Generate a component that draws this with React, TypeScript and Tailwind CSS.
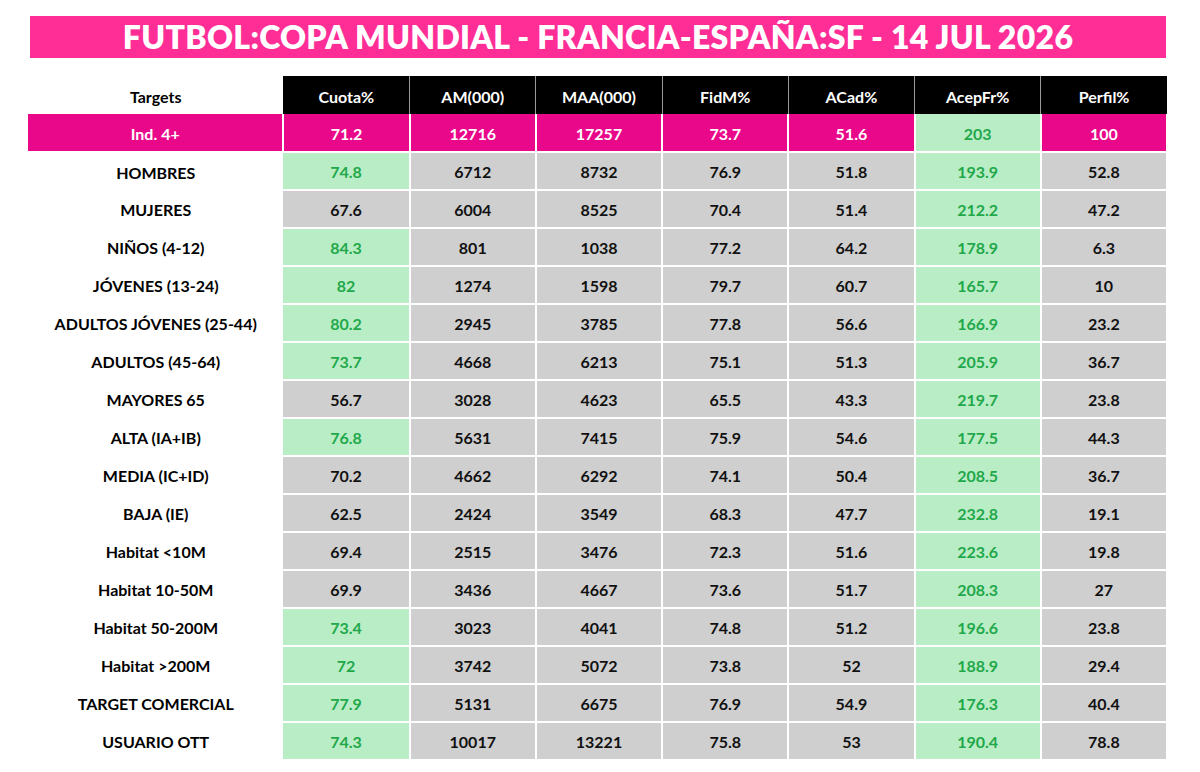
import React from 'react';

type Row = {
  name: string;
  cuota: string;
  cuotaUp: boolean;
  am: string;
  maa: string;
  fidm: string;
  acad: string;
  acep: string;
  perfil: string;
};

const ROWS: Row[] = [
  { name: 'HOMBRES', cuota: '74.8', cuotaUp: true, am: '6712', maa: '8732', fidm: '76.9', acad: '51.8', acep: '193.9', perfil: '52.8' },
  { name: 'MUJERES', cuota: '67.6', cuotaUp: false, am: '6004', maa: '8525', fidm: '70.4', acad: '51.4', acep: '212.2', perfil: '47.2' },
  { name: 'NIÑOS (4-12)', cuota: '84.3', cuotaUp: true, am: '801', maa: '1038', fidm: '77.2', acad: '64.2', acep: '178.9', perfil: '6.3' },
  { name: 'JÓVENES (13-24)', cuota: '82', cuotaUp: true, am: '1274', maa: '1598', fidm: '79.7', acad: '60.7', acep: '165.7', perfil: '10' },
  { name: 'ADULTOS JÓVENES (25-44)', cuota: '80.2', cuotaUp: true, am: '2945', maa: '3785', fidm: '77.8', acad: '56.6', acep: '166.9', perfil: '23.2' },
  { name: 'ADULTOS (45-64)', cuota: '73.7', cuotaUp: true, am: '4668', maa: '6213', fidm: '75.1', acad: '51.3', acep: '205.9', perfil: '36.7' },
  { name: 'MAYORES 65', cuota: '56.7', cuotaUp: false, am: '3028', maa: '4623', fidm: '65.5', acad: '43.3', acep: '219.7', perfil: '23.8' },
  { name: 'ALTA (IA+IB)', cuota: '76.8', cuotaUp: true, am: '5631', maa: '7415', fidm: '75.9', acad: '54.6', acep: '177.5', perfil: '44.3' },
  { name: 'MEDIA (IC+ID)', cuota: '70.2', cuotaUp: false, am: '4662', maa: '6292', fidm: '74.1', acad: '50.4', acep: '208.5', perfil: '36.7' },
  { name: 'BAJA (IE)', cuota: '62.5', cuotaUp: false, am: '2424', maa: '3549', fidm: '68.3', acad: '47.7', acep: '232.8', perfil: '19.1' },
  { name: 'Habitat <10M', cuota: '69.4', cuotaUp: false, am: '2515', maa: '3476', fidm: '72.3', acad: '51.6', acep: '223.6', perfil: '19.8' },
  { name: 'Habitat 10-50M', cuota: '69.9', cuotaUp: false, am: '3436', maa: '4667', fidm: '73.6', acad: '51.7', acep: '208.3', perfil: '27' },
  { name: 'Habitat 50-200M', cuota: '73.4', cuotaUp: true, am: '3023', maa: '4041', fidm: '74.8', acad: '51.2', acep: '196.6', perfil: '23.8' },
  { name: 'Habitat >200M', cuota: '72', cuotaUp: true, am: '3742', maa: '5072', fidm: '73.8', acad: '52', acep: '188.9', perfil: '29.4' },
  { name: 'TARGET COMERCIAL', cuota: '77.9', cuotaUp: true, am: '5131', maa: '6675', fidm: '76.9', acad: '54.9', acep: '176.3', perfil: '40.4' },
  { name: 'USUARIO OTT', cuota: '74.3', cuotaUp: true, am: '10017', maa: '13221', fidm: '75.8', acad: '53', acep: '190.4', perfil: '78.8' },
];

const HEADERS = ['Cuota%', 'AM(000)', 'MAA(000)', 'FidM%', 'ACad%', 'AcepFr%', 'Perfil%'];

const cell = 'h-[38px] pt-[2px] text-center align-middle border-r-2 border-b-2 border-white';
const gray = `${cell} bg-[#cfcfcf] text-[#111]`;
const green = `${cell} bg-[#b9edc6] text-[#22a84a]`;
const pink = `${cell} bg-[#e9088a]`;

export default function App() {
  return (
    <div className="w-[1200px] h-[772px] bg-white pt-4 font-['Lato',sans-serif] font-bold">
      {/* Title */}
      <div className="ml-[30px] w-[1136px] h-[42px] bg-[#ff2e97] flex items-center justify-center">
        <h1 className="text-white text-[32px] font-extrabold tracking-[0.3px] leading-none">
          FUTBOL:COPA MUNDIAL - FRANCIA-ESPAÑA:SF - 14 JUL 2026
        </h1>
      </div>

      <table className="mt-[18px] ml-[28px] border-collapse table-fixed w-[1140px] text-[16px]">
        <colgroup>
          <col className="w-[255px]" />
          {HEADERS.map((h) => (
            <col key={h} className="w-[126px]" />
          ))}
        </colgroup>
        <thead>
          <tr>
            <th className="h-[38px] pt-[3px] text-center text-black font-bold">Targets</th>
            {HEADERS.map((h) => (
              <th
                key={h}
                className="h-[38px] pt-[3px] bg-black text-white font-bold border-r border-[#9a9a9a] last:border-r-0"
              >
                {h}
              </th>
            ))}
          </tr>
        </thead>
        <tbody>
          {/* Total row */}
          <tr className="text-white">
            <td className={pink}>Ind. 4+</td>
            <td className={pink}>71.2</td>
            <td className={pink}>12716</td>
            <td className={pink}>17257</td>
            <td className={pink}>73.7</td>
            <td className={pink}>51.6</td>
            <td className={green}>203</td>
            <td className={pink}>100</td>
          </tr>
          {ROWS.map((r) => (
            <tr key={r.name}>
              <td className="h-[38px] pt-[2px] text-center text-black">{r.name}</td>
              <td className={r.cuotaUp ? green : gray}>{r.cuota}</td>
              <td className={gray}>{r.am}</td>
              <td className={gray}>{r.maa}</td>
              <td className={gray}>{r.fidm}</td>
              <td className={gray}>{r.acad}</td>
              <td className={green}>{r.acep}</td>
              <td className={gray}>{r.perfil}</td>
            </tr>
          ))}
        </tbody>
      </table>
    </div>
  );
}
